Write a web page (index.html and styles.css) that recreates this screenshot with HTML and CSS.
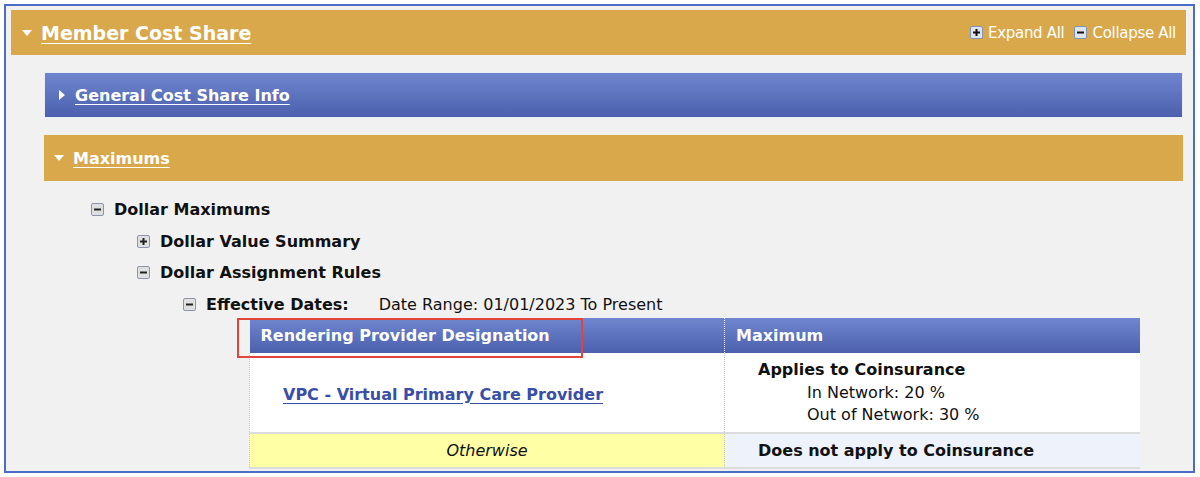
FILE: index.html
```html
<!DOCTYPE html>
<html lang="en">
<head>
<meta charset="UTF-8">
<title>Member Cost Share</title>
<link rel="stylesheet" href="styles.css">
</head>
<body>
<div class="frame">
  <div class="bar gold main">
    <span class="tri down"></span>
    <a class="bar-title">Member Cost Share</a>
    <div class="tools">
      <span class="tool"><svg class="box" width="13" height="13" viewBox="0 0 13 13"><rect x="0.5" y="0.5" width="12" height="12" rx="1.5" fill="#dfe4ec" stroke="#7f93b3"/><rect x="3" y="5.5" width="7" height="2" fill="#111"/><rect x="5.5" y="3" width="2" height="7" fill="#111"/></svg>Expand All</span>
      <span class="tool"><svg class="box" width="13" height="13" viewBox="0 0 13 13"><rect x="0.5" y="0.5" width="12" height="12" rx="1.5" fill="#dfe4ec" stroke="#7f93b3"/><rect x="3" y="5.5" width="7" height="2" fill="#111"/></svg>Collapse All</span>
    </div>
  </div>

  <div class="section">
    <div class="bar blue sub">
      <span class="tri right"></span>
      <a class="bar-title">General Cost Share Info</a>
    </div>
    <div class="bar gold sub">
      <span class="tri down"></span>
      <a class="bar-title">Maximums</a>
    </div>

    <div class="tree">
      <div class="node"><svg class="box" width="13" height="13" viewBox="0 0 13 13"><rect x="0.5" y="0.5" width="12" height="12" rx="1.5" fill="#e0e0e0" stroke="#8a96a8"/><rect x="3" y="5.5" width="7" height="2" fill="#222"/></svg>Dollar Maximums</div>
      <div class="level">
        <div class="node"><svg class="box" width="13" height="13" viewBox="0 0 13 13"><rect x="0.5" y="0.5" width="12" height="12" rx="1.5" fill="#e0e0e0" stroke="#8a96a8"/><rect x="3" y="5.5" width="7" height="2" fill="#222"/><rect x="5.5" y="3" width="2" height="7" fill="#222"/></svg>Dollar Value Summary</div>
        <div class="node"><svg class="box" width="13" height="13" viewBox="0 0 13 13"><rect x="0.5" y="0.5" width="12" height="12" rx="1.5" fill="#e0e0e0" stroke="#8a96a8"/><rect x="3" y="5.5" width="7" height="2" fill="#222"/></svg>Dollar Assignment Rules</div>
        <div class="level">
          <div class="node last"><svg class="box" width="13" height="13" viewBox="0 0 13 13"><rect x="0.5" y="0.5" width="12" height="12" rx="1.5" fill="#e0e0e0" stroke="#8a96a8"/><rect x="3" y="5.5" width="7" height="2" fill="#222"/></svg><span class="label">Effective Dates:</span><span class="range">Date Range: 01/01/2023 To Present</span></div>
          <div class="table-wrap">
            <span class="highlight"></span>
            <table class="rules">
              <thead>
                <tr>
                  <th class="col-a">Rendering Provider Designation</th>
                  <th class="col-b">Maximum</th>
                </tr>
              </thead>
              <tbody>
                <tr class="row-main">
                  <td class="col-a"><a class="provider">VPC - Virtual Primary Care Provider</a></td>
                  <td class="col-b">
                    <div class="strong">Applies to Coinsurance</div>
                    <div class="indent">In Network: 20 %</div>
                    <div class="indent">Out of Network: 30 %</div>
                  </td>
                </tr>
                <tr class="row-other">
                  <td class="col-a otherwise">Otherwise</td>
                  <td class="col-b strong">Does not apply to Coinsurance</td>
                </tr>
              </tbody>
            </table>
          </div>
        </div>
      </div>
    </div>
  </div>
</div>
</body>
</html>
```

FILE: styles.css
```css
body {
  margin: 0;
  background-color: #fff;
  font-family: "DejaVu Sans", Verdana, sans-serif;
}

.frame {
  margin: 4px 5px 4px 4px;
  height: 461px;
  border: 2px solid #4a6cc4;
  background-color: #f1f1f1;
  padding: 4px 7px 0 5px;
  overflow: hidden;
}

/* collapsible section bars */
.bar {
  display: flex;
  align-items: center;
  color: #fff;
}
.bar.gold {
  background-color: #d9a84a;
}
.bar.blue {
  background: linear-gradient(#6f86cf, #4c60ad);
  border: 1px solid #e8ecf6;
}
.bar.main {
  height: 45px;
  padding-left: 11px;
}
.bar.sub {
  height: 46px;
  padding-left: 10px;
  box-sizing: border-box;
}
.bar-title {
  font-weight: bold;
  text-decoration: underline;
  text-underline-offset: 3px;
  color: #fff;
}
.main .bar-title {
  font-size: 19px;
  margin-left: 9px;
}
.sub .bar-title {
  font-size: 16px;
  margin-left: 9px;
}
.tri {
  width: 0;
  height: 0;
}
.tri.down {
  border-left: 5.5px solid transparent;
  border-right: 5.5px solid transparent;
  border-top: 6px solid #fff;
}
.tri.right {
  border-top: 5px solid transparent;
  border-bottom: 5px solid transparent;
  border-left: 6px solid #fff;
  margin-left: 4px;
  margin-right: 1px;
}
.tools {
  margin-left: auto;
  display: flex;
  gap: 10px;
  font-size: 15px;
  letter-spacing: -0.3px;
  padding-right: 10px;
}
.tool {
  display: flex;
  align-items: center;
  gap: 5px;
}

.section {
  padding: 17px 3px 0 33px;
  display: flex;
  flex-direction: column;
  gap: 17px;
}

/* tree */
.tree {
  padding-left: 47px;
  margin-top: -4px;
  font-size: 16px;
  color: #111;
}
.level {
  padding-left: 46px;
}
.node {
  display: flex;
  align-items: center;
  height: 31.5px;
  font-weight: bold;
}
.node.last {
  height: 29px;
  padding-top: 2px;
  box-sizing: border-box;
}
.node .box {
  margin-right: 10px;
}
.range {
  font-weight: normal;
  font-size: 16px;
  margin-left: 30px;
}

/* rule table */
.table-wrap {
  position: relative;
  margin-left: 66px;
  width: 891px;
}
.highlight {
  position: absolute;
  left: -12px;
  top: 0;
  width: 342px;
  height: 36px;
  border: 2px solid #e2433b;
  z-index: 2;
}
.rules {
  width: 100%;
  border-collapse: collapse;
  font-size: 16px;
}
.rules th {
  height: 35px;
  padding: 0 11px;
  text-align: left;
  color: #fff;
  font-weight: bold;
  background: linear-gradient(#6f86cf, #4c60ad);
}
.rules th.col-b {
  border-left: 1px dotted #e8ecf6;
}
.rules .col-a {
  width: 475px;
  box-sizing: border-box;
}
.rules td {
  border-bottom: 2px solid #dcdcdc;
  vertical-align: middle;
}
.rules td.col-a {
  border-left: 1px dotted #c8c8c8;
}
.rules td.col-b {
  border-left: 1px dotted #c8c8c8;
  padding-left: 33px;
}
.row-main td {
  height: 74px;
  padding: 0;
  background-color: #fff;
}
.row-main td.col-a {
  padding: 4px 0 0 33px;
}
.row-main td.col-b {
  padding-top: 5px;
  vertical-align: top;
}
.provider {
  color: #3a4ea6;
  font-weight: bold;
  text-decoration: underline;
  text-underline-offset: 3px;
}
.strong {
  font-weight: bold;
}
.row-main .strong {
  line-height: 24px;
}
.indent {
  padding-left: 49px;
  line-height: 22.5px;
}
.row-other td {
  height: 33px;
  padding: 0;
}
.otherwise {
  background-color: #ffffa6;
  font-style: italic;
  text-align: center;
}
.row-other td.col-b {
  background-color: #edf2fb;
}
```
